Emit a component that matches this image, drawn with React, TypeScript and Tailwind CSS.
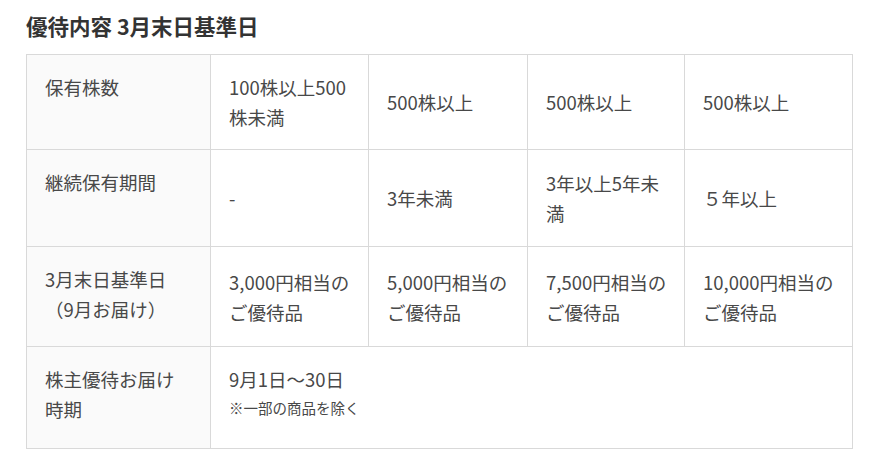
import React from "react";

const font = { fontFamily: '"Noto Sans CJK JP", "Noto Sans", sans-serif' };

function Th({ children, h }: { children: React.ReactNode; h: string }) {
  return (
    <div className={`border-r border-b border-[#d9d9d9] bg-[#fafafa] pl-[18px] pr-3 pt-[17px] text-[18.5px] leading-[30px] text-[#484848] ${h}`}>
      {children}
    </div>
  );
}

function Td({ children, h }: { children: React.ReactNode; h: string }) {
  return (
    <div className={`flex flex-col justify-center border-r border-b border-[#d9d9d9] bg-white pl-[18px] pr-2 text-[18.5px] leading-[30px] text-[#484848] ${h}`}>
      <div>{children}</div>
    </div>
  );
}

export default function App() {
  return (
    <div className="min-h-[459px] w-[870px] bg-white" style={font}>
      <div className="pl-[26px] pt-[11px]">
        <h2 className="text-[21.5px] font-bold leading-[30px] text-[#333]">優待内容 3月末日基準日</h2>
        <div className="mt-[13px] grid w-[827px] grid-cols-[184px_158px_159px_157px_168px] border-t border-l border-[#d9d9d9]">
          <Th h="h-[95px]">保有株数</Th>
          <Td h="h-[95px]">100株以上500<br />株未満</Td>
          <Td h="h-[95px]">500株以上</Td>
          <Td h="h-[95px]">500株以上</Td>
          <Td h="h-[95px]">500株以上</Td>

          <Th h="h-[97px]">継続保有期間</Th>
          <Td h="h-[97px]">-</Td>
          <Td h="h-[97px]">3年未満</Td>
          <Td h="h-[97px]">3年以上5年未<br />満</Td>
          <Td h="h-[97px]">５年以上</Td>

          <Th h="h-[100px]">3月末日基準日<br />（9月お届け）</Th>
          <Td h="h-[100px]">3,000円相当の<br />ご優待品</Td>
          <Td h="h-[100px]">5,000円相当の<br />ご優待品</Td>
          <Td h="h-[100px]">7,500円相当の<br />ご優待品</Td>
          <Td h="h-[100px]">10,000円相当の<br />ご優待品</Td>

          <Th h="h-[102px]">株主優待お届け<br />時期</Th>
          <div className="col-span-4 h-[102px] border-r border-b border-[#d9d9d9] bg-white pl-[18px] pt-[17px] text-[#484848]">
            <div className="text-[18.5px] leading-[30px]">9月1日〜30日</div>
            <div className="text-[14.5px] leading-[27px]">※一部の商品を除く</div>
          </div>
        </div>
      </div>
    </div>
  );
}
